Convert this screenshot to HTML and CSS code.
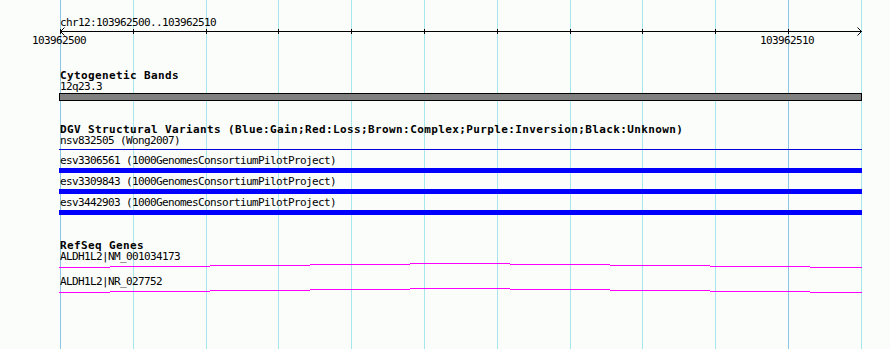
FILE: index.html
```html
<!DOCTYPE html>
<html lang="en">
  <head>
    <meta charset="UTF-8" />
    <meta name="viewport" content="width=device-width, initial-scale=1.0" />
    <title>Genome Browser Tracks</title>
    <link rel="stylesheet" href="styles.css">
  </head>
  <body>
    <div class="panel">
      <!-- vertical grid, every 72.8px from the first base -->
      <svg class="grid" width="890" height="349">
        <rect class="major" x="60" y="0" width="1" height="349" />
        <rect x="133" y="0" width="1" height="349" />
        <rect x="206" y="0" width="1" height="349" />
        <rect x="278" y="0" width="1" height="349" />
        <rect x="351" y="0" width="1" height="349" />
        <rect x="424" y="0" width="1" height="349" />
        <rect x="497" y="0" width="1" height="349" />
        <rect x="570" y="0" width="1" height="349" />
        <rect x="642" y="0" width="1" height="349" />
        <rect x="715" y="0" width="1" height="349" />
        <rect class="major" x="788" y="0" width="1" height="349" />
        <rect x="861" y="0" width="1" height="349" />
      </svg>

      <svg class="ruler" width="890" height="48">
        <text x="60" y="26">chr12:103962500..103962510</text>
        <rect x="60" y="31" width="802" height="1" />
        <rect x="60" y="29" width="1" height="5" />
        <rect x="133" y="29" width="1" height="5" />
        <rect x="206" y="29" width="1" height="5" />
        <rect x="278" y="29" width="1" height="5" />
        <rect x="351" y="29" width="1" height="5" />
        <rect x="424" y="29" width="1" height="5" />
        <rect x="497" y="29" width="1" height="5" />
        <rect x="570" y="29" width="1" height="5" />
        <rect x="642" y="29" width="1" height="5" />
        <rect x="715" y="29" width="1" height="5" />
        <rect x="788" y="29" width="1" height="5" />
        <polyline points="64.5,27.5 60.5,31.5 64.5,35.5" />
        <polyline points="857.5,27.5 861.5,31.5 857.5,35.5" />
        <text x="32" y="44">103962500</text>
        <text x="760" y="44">103962510</text>
      </svg>

      <section class="track track-bands">
        <div class="track-title">Cytogenetic Bands</div>
        <div class="label">12q23.3</div>
        <div class="band"></div>
      </section>

      <section class="track track-dgv">
        <div class="track-title">DGV Structural Variants (Blue:Gain;Red:Loss;Brown:Complex;Purple:Inversion;Black:Unknown)</div>
        <div class="label">nsv832505 (Wong2007)</div>
        <div class="thin"></div>
        <div class="feature">
          <div class="label">esv3306561 (1000GenomesConsortiumPilotProject)</div>
          <div class="bar"></div>
        </div>
        <div class="feature">
          <div class="label">esv3309843 (1000GenomesConsortiumPilotProject)</div>
          <div class="bar"></div>
        </div>
        <div class="feature">
          <div class="label">esv3442903 (1000GenomesConsortiumPilotProject)</div>
          <div class="bar"></div>
        </div>
      </section>

      <section class="track track-genes">
        <div class="track-title">RefSeq Genes</div>
        <div class="gene">
          <div class="label">ALDH1L2|NM_001034173</div>
          <svg class="transcript" width="803" height="6">
            <rect x="0" y="5" width="51" height="1" />
            <rect x="51" y="4" width="100" height="1" />
            <rect x="151" y="3" width="100" height="1" />
            <rect x="251" y="2" width="100" height="1" />
            <rect x="351" y="1" width="100" height="1" />
            <rect x="451" y="2" width="100" height="1" />
            <rect x="551" y="3" width="100" height="1" />
            <rect x="651" y="4" width="100" height="1" />
            <rect x="751" y="5" width="52" height="1" />
          </svg>
        </div>
        <div class="gene">
          <div class="label">ALDH1L2|NR_027752</div>
          <svg class="transcript" width="803" height="6">
            <rect x="0" y="5" width="51" height="1" />
            <rect x="51" y="4" width="100" height="1" />
            <rect x="151" y="3" width="100" height="1" />
            <rect x="251" y="2" width="100" height="1" />
            <rect x="351" y="1" width="100" height="1" />
            <rect x="451" y="2" width="100" height="1" />
            <rect x="551" y="3" width="100" height="1" />
            <rect x="651" y="4" width="100" height="1" />
            <rect x="751" y="5" width="52" height="1" />
          </svg>
        </div>
      </section>
    </div>
  </body>
</html>
```

FILE: styles.css
```css
body {
  margin: 0;
  background-color: #fbfdfb;
}

.panel {
  position: relative;
  width: 890px;
  height: 349px;
  overflow: hidden;
  background-color: #fbfdfb;
  font-family: "DejaVu Sans Mono", "Liberation Mono", monospace;
  font-size: 11px;
  letter-spacing: -0.62px;
  color: #000000;
}

.grid {
  position: absolute;
  top: 0;
  left: 0;
  z-index: 0;
}

.grid rect {
  fill: #a8e6ee;
}

.grid rect.major {
  fill: #8cc6e4;
}

.ruler,
.track {
  position: relative;
  z-index: 1;
}

.ruler {
  display: block;
}

.ruler text {
  font-family: "DejaVu Sans Mono", "Liberation Mono", monospace;
  font-size: 11px;
  letter-spacing: -0.62px;
  fill: #000000;
}

.ruler rect {
  fill: #000000;
}

.ruler polyline {
  fill: none;
  stroke: #000000;
  stroke-width: 1;
}

.track {
  padding-left: 60px;
}

.track-title {
  height: 11px;
  line-height: 11px;
  font-weight: bold;
  letter-spacing: 0.38px;
  white-space: nowrap;
}

.label {
  height: 11px;
  line-height: 11px;
  white-space: nowrap;
}

.track-bands {
  margin-top: 22px;
}

.band {
  box-sizing: border-box;
  margin-top: 1px;
  margin-left: -1px;
  width: 803px;
  height: 8px;
  border: 1px solid #000000;
  background-color: #808080;
}

.track-dgv {
  margin-top: 23px;
}

.thin {
  margin: 3px 0 2px -1px;
  width: 803px;
  height: 1px;
  background-color: #0000d8;
}

.feature {
  padding-top: 3px;
}

.bar {
  margin-top: 2px;
  margin-left: -1px;
  width: 803px;
  height: 5px;
  background-color: #0000ff;
}

.track-genes {
  margin-top: 25px;
}

.gene + .gene {
  margin-top: 8px;
}

.transcript {
  display: block;
  margin-left: -1px;
}

.transcript rect {
  fill: #ff00ff;
}
```
